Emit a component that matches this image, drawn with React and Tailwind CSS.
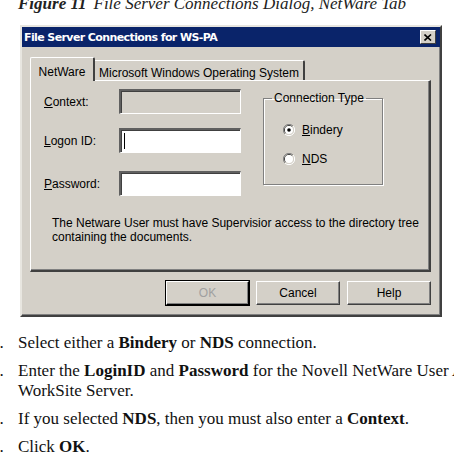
import React from "react";

const ui = { fontFamily: '"Liberation Sans", Arial, sans-serif' };
const serif = { fontFamily: '"Liberation Serif", "Times New Roman", serif' };

function Radio({ checked }) {
  return (
    <svg width="12" height="12" viewBox="0 0 12 12" className="shrink-0">
      <path d="M10 2 A5.5 5.5 0 0 0 2 10" fill="none" stroke="#808080" strokeWidth="1" />
      <path d="M9.2 2.8 A4.5 4.5 0 0 0 2.8 9.2" fill="none" stroke="#404040" strokeWidth="1" />
      <path d="M2 10 A5.5 5.5 0 0 0 10 2" fill="none" stroke="#ffffff" strokeWidth="1" />
      <path d="M2.8 9.2 A4.5 4.5 0 0 0 9.2 2.8" fill="none" stroke="#d4d0c8" strokeWidth="1" />
      <circle cx="6" cy="6" r="4" fill="#ffffff" />
      {checked && <circle cx="6" cy="6" r="1.8" fill="#000000" />}
    </svg>
  );
}

function Field({ label, accel, disabled, caret }) {
  return (
    <div className="flex items-center">
      <div className="w-[75px] text-[12px] leading-[14px] text-black">
        <span className="underline">{accel}</span>
        {label}
      </div>
      <div
        className={`w-[122px] h-[25px] border-t-2 border-l-2 border-t-[#606060] border-l-[#606060] border-r border-b border-r-[#ffffff] border-b-[#ffffff] shadow-[inset_1px_1px_0_#404040] flex items-center pl-[3px] ${
          disabled ? "bg-[#d4d0c8]" : "bg-white"
        }`}
      >
        {caret && <div className="w-px h-[16px] bg-black" />}
      </div>
    </div>
  );
}

function Button({ children, disabled, def }) {
  return (
    <div
      className={`h-[24px] flex items-center justify-center text-[12px] bg-[#d4d0c8] border-t border-l border-t-white border-l-white border-r border-b ${
        def ? "border-r-[#000] border-b-[#000] outline outline-1 outline-black" : "border-r-[#404040] border-b-[#404040]"
      } shadow-[inset_-1px_-1px_0_#808080] ${disabled ? "text-[#a0a0a0]" : "text-black"}`}
      style={{ width: children === "OK" ? 83 : 84 }}
    >
      {children}
    </div>
  );
}

export default function App() {
  return (
    <div className="w-[454px] h-[463px] bg-white overflow-hidden">
      {/* caption */}
      <div className="-mt-[5px] h-[30px] pl-[18px] text-[17px] leading-[17px] text-[#222] whitespace-nowrap italic" style={serif}>
        <span className="font-bold">Figure 11</span>
        <span className="ml-[7px]">File Server Connections Dialog, NetWare Tab</span>
      </div>

      {/* dialog */}
      <div
        className="ml-[20px] w-[422px] h-[292px] bg-[#d4d0c8] border-t-2 border-l-2 border-t-[#e8e6e0] border-l-[#e8e6e0] border-r-2 border-b-2 border-r-[#404040] border-b-[#404040] shadow-[inset_-1px_-1px_0_#808080]"
        style={ui}
      >
        {/* title bar */}
        <div className="h-[20px] w-[418px] bg-[#0a246a] flex items-center justify-between pl-[2px] pr-[4px]">
          <span className="text-white font-bold text-[11px] leading-none" style={{ fontFamily: '"DejaVu Sans", Verdana, sans-serif', letterSpacing: "-0.6px" }}>
            File Server Connections for WS-PA
          </span>
          <div className="w-[16px] h-[14px] bg-[#d4d0c8] border-t border-l border-t-white border-l-white border-r border-b border-r-[#404040] border-b-[#404040] flex items-center justify-center">
            <svg width="8" height="7" viewBox="0 0 8 7">
              <path d="M0.5 0.5 L7 6.5 M7 0.5 L0.5 6.5" stroke="#000" strokeWidth="1.6" />
            </svg>
          </div>
        </div>

        {/* tabs */}
        <div className="mt-[10px] ml-[8px] h-[23px] flex items-end relative z-10">
          <div className="w-[65px] h-[24px] -mb-[1px] bg-[#d4d0c8] border-t border-l border-t-white border-l-white border-r-2 border-r-[#404040] rounded-t-[2px] text-[12px] flex items-start justify-center pt-[5px]">
            NetWare
          </div>
          <div className="w-[210px] h-[20px] bg-[#d4d0c8] border-t border-t-white border-r-2 border-r-[#404040] rounded-tr-[2px] text-[12px] flex items-start justify-center pt-[3px] whitespace-nowrap">
            Microsoft Windows Operating System
          </div>
        </div>

        {/* panel */}
        <div className="ml-[8px] w-[401px] h-[192px] border-t border-l border-t-white border-l-white border-r-2 border-b-2 border-r-[#404040] border-b-[#404040] shadow-[inset_-1px_-1px_0_#808080]">
          <div className="flex">
            <div className="pl-[13px] pt-[8px] flex flex-col">
              <Field accel="C" label="ontext:" disabled />
              <div className="h-[14px]" />
              <Field accel="L" label="ogon ID:" caret />
              <div className="h-[18px]" />
              <Field accel="P" label="assword:" />
            </div>
            <fieldset className="ml-[22px] mt-[10px] w-[120px] h-[94px] border border-[#808080] shadow-[inset_1px_1px_0_#ffffff,1px_1px_0_#ffffff] p-0 m-0">
              <legend className="ml-[8px] px-[2px] text-[12px] leading-[14px] whitespace-nowrap">Connection Type</legend>
              <div className="ml-[19px] mt-[18px] flex items-center gap-[7px] text-[12px] leading-[14px]">
                <Radio checked />
                <span>
                  <span className="underline">B</span>indery
                </span>
              </div>
              <div className="ml-[19px] mt-[15px] flex items-center gap-[7px] text-[12px] leading-[14px]">
                <Radio />
                <span>
                  <span className="underline">N</span>DS
                </span>
              </div>
            </fieldset>
          </div>
          <div className="mt-[20px] pl-[21px] text-[12px] leading-[14px] whitespace-nowrap">
            The Netware User must have Supervisior access to the directory tree
            <br />
            containing the documents.
          </div>
        </div>

        {/* buttons */}
        <div className="mt-[9px] ml-[144px] flex gap-[7px]">
          <Button disabled def>OK</Button>
          <Button>Cancel</Button>
          <Button>Help</Button>
        </div>
      </div>

      {/* steps */}
      <div className="mt-[16px] flex flex-col gap-[8px] text-[17px] leading-[20px] text-[#111] whitespace-nowrap" style={serif}>
        {[
          <>Select either a <b>Bindery</b> or <b>NDS</b> connection.</>,
          <>Enter the <b>LoginID</b> and <b>Password</b> for the Novell NetWare User Account on the<br />WorkSite Server.</>,
          <>If you selected <b>NDS</b>, then you must also enter a <b>Context</b>.</>,
          <>Click <b>OK</b>.</>,
        ].map((c, i) => (
          <div key={i} className="flex">
            <div className="-ml-[9px] w-[12px] text-right shrink-0">{i + 1}.</div>
            <div className="ml-[15px]">{c}</div>
          </div>
        ))}
      </div>
    </div>
  );
}
